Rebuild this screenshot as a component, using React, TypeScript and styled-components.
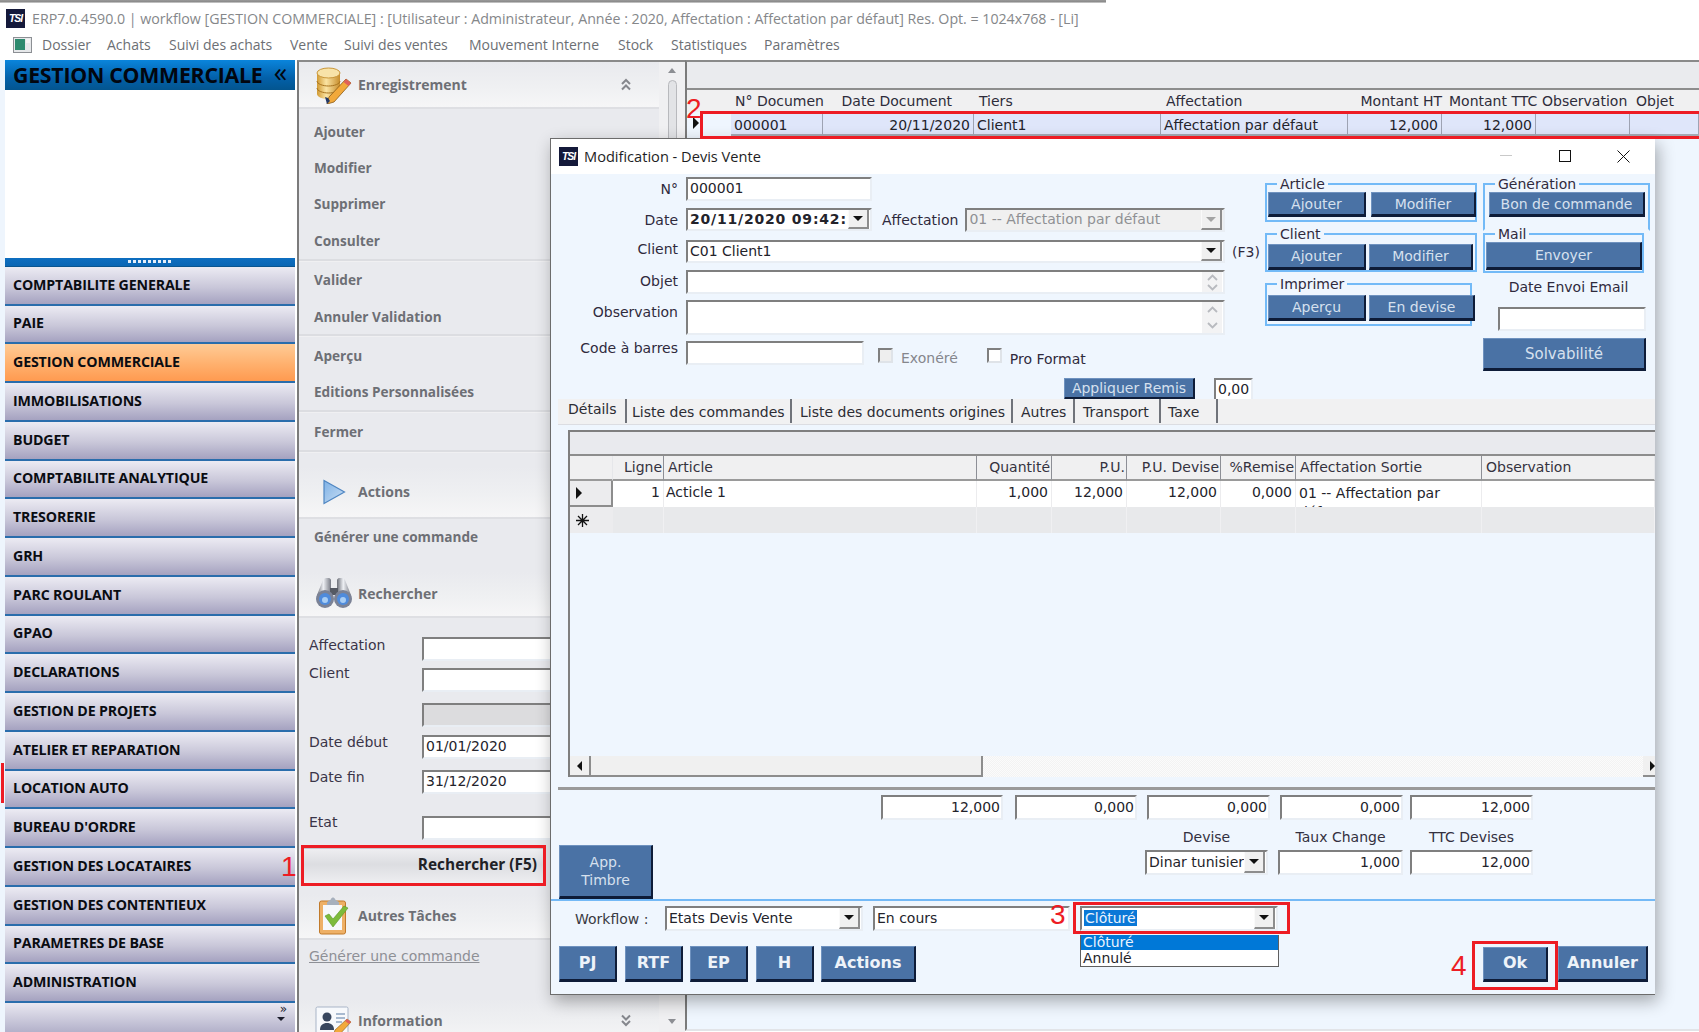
import React from "react";
import styled, { createGlobalStyle } from "styled-components";

const Global = createGlobalStyle`
  html, body { margin: 0; padding: 0; background: #fff; }
  * { box-sizing: border-box; }
  #root { width: 1699px; height: 1032px; }
`;

const UI = `"DejaVu Sans", Verdana, sans-serif`;
const HEAD = `"Open Sans", "Noto Sans", sans-serif`;

const Page = styled.div`
  position: relative;
  width: 1699px;
  height: 1032px;
  overflow: hidden;
  background: #fff;
  display: flex;
  flex-direction: column;
  font-family: ${UI};
  font-size: 14px;
  color: #2b2b33;
`;

/* ---------- window chrome ---------- */
const TopEdge = styled.div`
  width: 1106px;
  height: 3px;
  flex: none;
  background: linear-gradient(#9a9a9a, #8a8a8a 60%, #e4e4e4);
`;
const TitleBar = styled.div`
  height: 30px;
  flex: none;
  display: flex;
  align-items: center;
  gap: 7px;
  padding-left: 6px;
  font-family: ${HEAD};
  font-size: 14.23px;
  letter-spacing: -0.02px;
  color: #85878a;
  white-space: nowrap;
`;
const Logo = styled.span<{ $s: number }>`
  width: ${(p) => p.$s}px;
  height: ${(p) => p.$s}px;
  flex: none;
  background: #14193a;
  color: #fff;
  font: italic 700 ${(p) => p.$s * 0.55}px "Liberation Sans", sans-serif;
  letter-spacing: -1px;
  display: flex;
  align-items: center;
  justify-content: center;
`;
const MenuBar = styled.div`
  height: 27px;
  flex: none;
  display: grid;
  grid-template-columns: 42px 65px 62px 121px 54px 125px 149px 53px 93px auto;
  align-items: start;
  padding-top: 2px;
  font-family: ${HEAD};
  font-size: 14px;
  line-height: 20px;
  color: #6c6f74;
  white-space: nowrap;
`;
const MenuGlyph = styled.span`
  padding: 2px 0 0 13px;
  display: block;
`;

const Body = styled.div`
  flex: 1;
  min-height: 0;
  display: flex;
`;

/* ---------- left navigation ---------- */
const Gutter = styled.div`
  width: 5px;
  flex: none;
  display: flex;
  flex-direction: column;
  background: #eef5fd;
`;
const RedMark = styled.div`
  margin: 703px 0 0 1px;
  width: 3px;
  height: 40px;
  background: #ed1c24;
`;
const Sidebar = styled.nav`
  width: 290px;
  flex: none;
  display: flex;
  flex-direction: column;
  margin-right: 2px;
  background: #fff;
`;
const SideHead = styled.div`
  height: 30px;
  flex: none;
  display: flex;
  align-items: center;
  justify-content: space-between;
  padding: 0 8px 2px 8px;
  background: linear-gradient(#0a85dc, #0360a9 60%, #03558f);
  font-family: ${HEAD};
  font-weight: 700;
  font-size: 21.3px;
  letter-spacing: -0.25px;
  color: #02060f;
  white-space: nowrap;
`;
const Chev = styled.span`
  font-size: 27px;
  font-weight: 400;
  line-height: 22px;
  padding-bottom: 4px;
`;
const SideBlank = styled.div`
  flex: 1;
  background: #fff;
`;
const Splitter = styled.div`
  height: 9px;
  flex: none;
  background: linear-gradient(#0e6ec0, #0a66b4);
  border-bottom: 1px solid #0a5590;
  display: flex;
  align-items: center;
  justify-content: center;
  &::after {
    content: "";
    width: 44px;
    height: 3px;
    background: repeating-linear-gradient(90deg, #e6eef8 0 3px, transparent 3px 5px);
  }
`;
const SideItem = styled.div<{ $active?: boolean }>`
  height: 38.75px;
  flex: none;
  display: flex;
  align-items: center;
  padding: 0 0 2px 8px;
  font-family: ${HEAD};
  font-weight: 700;
  font-size: 14.2px;
  letter-spacing: -0.14px;
  color: #0a0c12;
  background: ${(p) =>
    p.$active
      ? "linear-gradient(#ffcb96, #ffb06d 55%, #ff9a50)"
      : "linear-gradient(#ecebf3, #c9c7d9 55%, #a5a2c0)"};
  border-bottom: 2px solid #2a6dac;
  white-space: nowrap;
`;
const SideFoot = styled.div`
  height: 29px;
  flex: none;
  display: flex;
  flex-direction: column;
  align-items: flex-end;
  padding: 1px 8px 0 0;
  background: linear-gradient(#e9e8f1, #b3b1ca);
  color: #1c1e2c;
  font-size: 12px;
  line-height: 11px;
`;
const DownTip = styled.span`
  width: 0;
  height: 0;
  margin: 2px 2px 0 0;
  border-left: 4px solid transparent;
  border-right: 4px solid transparent;
  border-top: 4px solid #1c1e2c;
`;

/* ---------- tasks panel ---------- */
const TaskPanel = styled.aside`
  width: 388px;
  flex: none;
  display: flex;
  border-left: 2px solid #7b7b7b;
  border-top: 2px solid #8a8a8a;
  background: #e9eaee;
  overflow: hidden;
`;
const TaskColumn = styled.div`
  width: 360px;
  flex: none;
  display: flex;
  flex-direction: column;
`;
const TaskScroll = styled.div`
  width: 26px;
  flex: none;
  display: flex;
  flex-direction: column;
  align-items: center;
  padding-top: 6px;
  background: #f0f0f2;
`;
const ScrollUp = styled.span`
  width: 0;
  height: 0;
  border-left: 4px solid transparent;
  border-right: 4px solid transparent;
  border-bottom: 5px solid #8c8e93;
`;
const ScrollDown = styled.span`
  width: 0;
  height: 0;
  margin-top: auto;
  margin-bottom: 8px;
  border-left: 4px solid transparent;
  border-right: 4px solid transparent;
  border-top: 5px solid #8c8e93;
`;
const ScrollThumb = styled.span`
  margin-top: 7px;
  width: 9px;
  height: 80px;
  background: #e2e3e6;
  border: 1px solid #b8b9bd;
  border-radius: 5px;
`;
const SecHead = styled.div<{ $h: number; $mt?: number }>`
  height: ${(p) => p.$h}px;
  margin-top: ${(p) => p.$mt ?? 0}px;
  flex: none;
  display: flex;
  align-items: center;
  padding-left: 16px;
  gap: 5px;
  background: linear-gradient(180deg, #e9eaee, #eff0f2 55%, #f6f6f7);
  border-bottom: 2px solid #dedfe3;
  font-family: ${HEAD};
  font-weight: 700;
  font-size: 14px;
  color: #6d6f75;
  white-space: nowrap;
`;
const SecIcon = styled.span`
  width: 38px;
  height: 38px;
  flex: none;
  display: flex;
  align-items: center;
  justify-content: center;
`;
const SecTitle = styled.span`
  flex: 1;
`;
const SecChev = styled.span`
  margin-right: 27px;
  line-height: 0;
`;
const TaskItem = styled.div<{ $h?: number }>`
  height: ${(p) => p.$h ?? 36.4}px;
  flex: none;
  display: flex;
  align-items: center;
  padding-left: 15px;
  font-family: ${HEAD};
  font-weight: 700;
  font-size: 13.6px;
  color: #6d6f75;
  white-space: nowrap;
`;
const TaskRule = styled.div`
  height: 3px;
  flex: none;
  background: #dcdde1;
  border-bottom: 1px solid #f0f0f2;
`;
const SearchRow = styled.div<{ $mt: number }>`
  margin-top: ${(p) => p.$mt}px;
  display: flex;
  flex: none;
  height: 24px;
  padding-left: 10px;
  font-size: 14px;
  color: #3a3448;
`;
const SearchLabel = styled.span<{ $up?: number }>`
  width: 113px;
  margin-top: ${(p) => -(p.$up ?? 2)}px;
  flex: none;
  line-height: 18px;
`;
const SearchBtn = styled.div`
  height: 38px;
  flex: none;
  margin: 7px 0 0 2px;
  padding: 0 8px 3px 0;
  display: flex;
  align-items: center;
  justify-content: flex-end;
  width: 244px;
  background: linear-gradient(#eeeef1, #dcdde1 45%, #eeeef1);
  border-top: 2px solid #c6c7cc;
  border-bottom: 2px solid #c6c7cc;
  font-family: ${HEAD};
  font-weight: 700;
  font-size: 15.4px;
  color: #202126;
  white-space: nowrap;
`;
const TaskLink = styled.div`
  height: 24px;
  margin-top: 4px;
  flex: none;
  padding-left: 10px;
  display: flex;
  align-items: center;
  font-size: 14px;
  color: #8e9096;
  text-decoration: underline;
  white-space: nowrap;
`;

/* ---------- generic fields ---------- */
const Field = styled.div<{
  $w?: number;
  $h?: number;
  $right?: boolean;
  $bold?: boolean;
  $off?: boolean;
  $ml?: number;
  $bg?: string;
}>`
  width: ${(p) => (p.$w ? `${p.$w}px` : "auto")};
  height: ${(p) => p.$h ?? 24}px;
  margin-left: ${(p) => p.$ml ?? 0}px;
  flex: ${(p) => (p.$w ? "none" : "1")};
  display: flex;
  align-items: center;
  justify-content: ${(p) => (p.$right ? "flex-end" : "flex-start")};
  padding: ${(p) => (p.$right ? "0 1px 2px 1px" : "0 1px 0 1px")};
  background: ${(p) => p.$bg ?? "#fff"};
  border-style: solid;
  border-width: 2px;
  border-color: #7f7f7f #e9eef4 #e9eef4 #7f7f7f;
  font-family: ${UI};
  font-size: 14px;
  font-weight: ${(p) => (p.$bold ? 700 : 400)};
  letter-spacing: ${(p) => (p.$bold ? "0.8px" : "0")};
  color: ${(p) => (p.$off ? "#8f9094" : "#23232b")};
  white-space: nowrap;
  overflow: hidden;
`;
const FieldText = styled.span`
  flex: 1;
  min-width: 0;
  overflow: hidden;
  padding: 0 0 2px 1px;
`;
const DropBtn = styled.span<{ $off?: boolean }>`
  width: 21px;
  height: 100%;
  flex: none;
  display: flex;
  align-items: center;
  justify-content: center;
  background: #f0f0f0;
  border-right: 2px solid #8d8d8d;
  border-bottom: 2px solid #8d8d8d;
  border-left: 1px solid #fafafa;
  &::after {
    content: "";
    border-left: 5px solid transparent;
    border-right: 5px solid transparent;
    border-top: 5px solid ${(p) => (p.$off ? "#a4a4a4" : "#111")};
  }
`;
const Spin = styled.span`
  width: 20px;
  height: 100%;
  flex: none;
  display: flex;
  flex-direction: column;
  align-items: center;
  justify-content: space-around;
  background: #f3f3f4;
  line-height: 0;
`;
const Chevron = ({ down, c = "#b8babf", s = 11 }: { down?: boolean; c?: string; s?: number }) => (
  <svg width={s} height={7} viewBox="0 0 11 7" fill="none">
    <path d={down ? "M1 1l4.500 4.500L10 1" : "M1 6l4.500-4.500L10 6"} stroke={c} strokeWidth={1.8} />
  </svg>
);
const DoubleChevron = ({ down }: { down?: boolean }) => (
  <svg width="12" height="13" viewBox="0 0 12 13" fill="none" stroke="#85878d" strokeWidth="2">
    {down ? <path d="M2 1.500l4 4 4-4M2 7l4 4 4-4" /> : <path d="M2 6l4-4 4 4M2 11.500l4-4 4 4" />}
  </svg>
);

/* ---------- workspace (document list behind the dialog) ---------- */
const Workspace = styled.main`
  flex: 1;
  min-width: 0;
  display: flex;
  flex-direction: column;
  background: #eff6fe;
  border-top: 2px solid #8a8a8a;
  border-left: 2px solid #7b7b7b;
  border-bottom: 2px solid #e2e4e8;
  margin-bottom: 1px;
  font-size: 14px;
`;
const GroupStrip = styled.div`
  height: 28px;
  flex: none;
  background: #eaebee;
  border-bottom: 2px solid #8d8d8d;
`;
const ListGrid = styled.div<{ $bg: string; $h: number }>`
  height: ${(p) => p.$h}px;
  flex: none;
  display: grid;
  grid-template-columns: 44px 92px 151px 187px 187px 94px 94px 94px 1fr;
  background: ${(p) => p.$bg};
  align-items: center;
  white-space: nowrap;
`;
const ListHead = styled.div<{ $pl?: number; $pr?: number; $right?: boolean }>`
  padding-left: ${(p) => p.$pl ?? 5}px;
  padding-right: ${(p) => p.$pr ?? 0}px;
  text-align: ${(p) => (p.$right ? "right" : "left")};
  color: #2e2c3a;
`;
const ListCell = styled.div<{ $right?: boolean }>`
  height: 100%;
  display: flex;
  align-items: center;
  justify-content: ${(p) => (p.$right ? "flex-end" : "flex-start")};
  padding: 3px 3px 0;
  background: #dfe6fa;
  border-right: 1px solid #9ea3b3;
  border-bottom: 2px solid #a5a8b2;
  color: #23232b;
`;
const RowMark = styled.div`
  height: 100%;
  display: flex;
  align-items: center;
  padding: 0 0 2px 6px;
  background: #eff6fe;
`;
const Arrow = styled.span`
  width: 0;
  height: 0;
  border-top: 6px solid transparent;
  border-bottom: 6px solid transparent;
  border-left: 6px solid #111;
`;

/* ---------- dialog ---------- */
const Dialog = styled.section`
  position: absolute;
  left: 550px;
  top: 138px;
  width: 1105px;
  height: 857px;
  display: flex;
  flex-direction: column;
  background: #eff6fe;
  border-top: 1px solid #6c6c6c;
  border-left: 1px solid #6c6c6c;
  border-bottom: 1px solid #6c6c6c;
  box-shadow: 3px 6px 16px rgba(0, 0, 0, 0.32);
`;
const DialogTitle = styled.header`
  height: 35px;
  flex: none;
  display: flex;
  align-items: center;
  padding: 0 0 1px 8px;
  gap: 6px;
  background: #fff;
  font-family: ${HEAD};
  font-size: 14.6px;
  color: #1e1e24;
`;
const TitleText = styled.span`
  flex: 1;
`;
const WinBtn = styled.span<{ $w: number }>`
  width: ${(p) => p.$w}px;
  display: flex;
  justify-content: center;
  line-height: 0;
`;

const TopForm = styled.div`
  height: 225px;
  flex: none;
  display: flex;
`;
const FormColumn = styled.div`
  width: 707px;
  flex: none;
  padding-top: 3px;
  display: flex;
  flex-direction: column;
`;
const FormRow = styled.div<{ $mt?: number }>`
  margin-top: ${(p) => p.$mt ?? 0}px;
  display: flex;
  align-items: flex-start;
  flex: none;
`;
const FormLabel = styled.label<{ $up?: number }>`
  width: 127px;
  margin-top: ${(p) => 3 - (p.$up ?? 0)}px;
  margin-right: 8px;
  flex: none;
  text-align: right;
  color: #2f2a3d;
  line-height: 18px;
  white-space: nowrap;
`;
const InlineLabel = styled.span<{ $ml: number; $off?: boolean; $pt?: number }>`
  margin-left: ${(p) => p.$ml}px;
  padding-top: ${(p) => p.$pt ?? 3}px;
  line-height: 18px;
  flex: none;
  color: ${(p) => (p.$off ? "#85868c" : "#2f2a3d")};
  white-space: nowrap;
`;
const Check = styled.span<{ $ml: number; $off?: boolean }>`
  margin: 7px 8px 0 ${(p) => p.$ml}px;
  width: 15px;
  height: 15px;
  flex: none;
  background: ${(p) => (p.$off ? "#eeeeee" : "#fff")};
  border: 2px solid;
  border-color: #7f7f7f #dfe3e8 #dfe3e8 #7f7f7f;
`;
const Pad = styled.span<{ $w: number }>`
  width: ${(p) => p.$w}px;
  flex: none;
`;
const Btn = styled.button<{ $w?: number; $h?: number; $bold?: boolean; $ml?: number; $size?: number }>`
  width: ${(p) => (p.$w ? `${p.$w}px` : "100%")};
  height: ${(p) => p.$h ?? 25}px;
  margin-left: ${(p) => p.$ml ?? 0}px;
  flex: none;
  padding: 0;
  background: #4a72a5;
  border-style: solid;
  border-width: 1px 2px 3px 1px;
  border-color: #6f92bf #0e1c38 #0e1c38 #6f92bf;
  color: ${(p) => (p.$bold ? "#eef3f9" : "#d6e0ee")};
  font-family: ${UI};
  font-size: ${(p) => p.$size ?? 14}px;
  font-weight: ${(p) => (p.$bold ? 700 : 400)};
  line-height: 18px;
  white-space: nowrap;
`;

const GroupCol = styled.div<{ $w: number; $ml: number }>`
  width: ${(p) => p.$w}px;
  margin-left: ${(p) => p.$ml}px;
  padding-top: 2px;
  flex: none;
  display: flex;
  flex-direction: column;
  gap: 4px;
`;
const Group = styled.fieldset<{ $w?: number; $h: number; $open?: boolean; $pt?: number }>`
  width: ${(p) => (p.$w ? `${p.$w}px` : "100%")};
  height: ${(p) => p.$h}px;
  margin: 0 0 ${(p) => (p.$open ? "-9px" : "0")} 0;
  padding: ${(p) => p.$pt ?? 0}px 0 0 1px;
  min-width: 0;
  flex: none;
  display: flex;
  border: 2px solid #73baf7;
  border-bottom-color: ${(p) => (p.$open ? "transparent" : "#73baf7")};
`;
const Legend = styled.legend`
  margin-left: 9px;
  padding: 0 3px;
  height: 16px;
  line-height: 16px;
  font-size: 14px;
  color: #2f2a3d;
`;
const GroupButtons = styled.div`
  display: flex;
`;
const EmailLabel = styled.div`
  margin: 1px 0 0;
  padding-left: 4px;
  text-align: center;
  line-height: 18px;
  color: #2f2a3d;
`;

const TabStrip = styled.div`
  height: 25px;
  margin-left: 7px;
  flex: none;
  display: flex;
  background: #f1f1f2;
  white-space: nowrap;
`;
const Tab = styled.div<{ $active?: boolean; $w: number; $pl?: number }>`
  width: ${(p) => p.$w}px;
  flex: none;
  padding-left: ${(p) => p.$pl ?? 5}px;
  padding-top: ${(p) => (p.$active ? 1 : 4)}px;
  line-height: 18px;
  color: #2c2c34;
  border-right: 2px solid #70737a;
  margin-bottom: 1px;
`;
const TabPage = styled.div`
  height: 366px;
  margin-left: 7px;
  flex: none;
  display: flex;
  flex-direction: column;
  padding: 5px 0 10px 10px;
  background: #eff6fe;
  border-top: 1px solid #dcdde2;
  border-bottom: 3px solid #9a9a9a;
`;
const GridBox = styled.div`
  flex: 1;
  min-height: 0;
  display: flex;
  flex-direction: column;
  border-left: 2px solid #7f7f7f;
  border-top: 2px solid #7f7f7f;
`;
const GridStrip = styled.div`
  height: 24px;
  flex: none;
  background: #e9eaee;
  border-bottom: 2px solid #8d8d8d;
`;
const GridRow = styled.div<{ $h: number; $bg: string }>`
  height: ${(p) => p.$h}px;
  flex: none;
  display: grid;
  grid-template-columns: 43px 51px 313px 75px 75px 94px 75px 186px 1fr;
  background: ${(p) => p.$bg};
  white-space: nowrap;
`;
const HeadCell = styled.div<{ $right?: boolean; $sep?: boolean }>`
  display: flex;
  align-items: center;
  justify-content: ${(p) => (p.$right ? "flex-end" : "flex-start")};
  padding: 0 1px 1px 4px;
  overflow: hidden;
  color: #35333f;
  border-right: ${(p) => (p.$sep ? "1px solid #8d8f96" : "1px solid #e6e7ea")};
  border-bottom: 2px solid #9a9a9a;
`;
const BodyCell = styled.div<{ $right?: boolean; $tone?: string }>`
  display: flex;
  align-items: flex-start;
  justify-content: ${(p) => (p.$right ? "flex-end" : "flex-start")};
  padding: 3px 3px 0 2px;
  overflow: hidden;
  border-right: 1px solid ${(p) => p.$tone ?? "#ececee"};
  color: #23232b;
`;
const WrapCell = styled(BodyCell)`
  white-space: normal;
  line-height: 19px;
  display: block;
  padding-left: 3px;
`;
const RowHeadCell = styled.div<{ $line?: boolean }>`
  display: flex;
  align-items: center;
  padding-left: 6px;
  background: #ececee;
  border-right: ${(p) => (p.$line ? "2px solid #8d8d8d" : "none")};
  border-bottom: ${(p) => (p.$line ? "2px solid #8d8d8d" : "none")};
`;
const NewRowIcon = () => (
  <svg width="13" height="13" viewBox="0 0 13 13" stroke="#111" strokeWidth="1.300">
    <path d="M6.500 0v13M0 6.500h13M2 2l9 9M11 2l-9 9" />
  </svg>
);
const GridFill = styled.div`
  flex: 1;
`;
const HScroll = styled.div`
  height: 21px;
  flex: none;
  display: flex;
  overflow: hidden;
  background: repeating-conic-gradient(#f3f3f3 0 25%, #fbfbfb 0 50%) 0 0 / 2px 2px;
`;
const HScrollBtn = styled.span<{ $right?: boolean }>`
  width: 21px;
  flex: none;
  margin-left: ${(p) => (p.$right ? "auto" : 0)};
  margin-right: ${(p) => (p.$right ? "-9px" : 0)};
  display: flex;
  align-items: center;
  justify-content: center;
  background: #f0f0f0;
  border-right: 2px solid #8d8d8d;
  border-bottom: 2px solid #8d8d8d;
  &::after {
    content: "";
    border-top: 5px solid transparent;
    border-bottom: 5px solid transparent;
    border-${(p) => (p.$right ? "left" : "right")}: 5px solid #111;
  }
`;
const HThumb = styled.span`
  width: 392px;
  flex: none;
  background: #f0f0f0;
  border-right: 2px solid #8d8d8d;
  border-bottom: 2px solid #8d8d8d;
`;

const TotalsArea = styled.div`
  height: 109px;
  flex: none;
  display: flex;
`;
const TimbreCol = styled.div`
  width: 330px;
  flex: none;
  padding-left: 8px;
  display: flex;
  align-items: flex-end;
`;
const FieldsCol = styled.div`
  flex: 1;
  padding-top: 5px;
  display: flex;
  flex-direction: column;
`;
const FieldsRow = styled.div<{ $mt?: number; $ml?: number }>`
  margin-top: ${(p) => p.$mt ?? 0}px;
  margin-left: ${(p) => p.$ml ?? 0}px;
  display: flex;
  flex: none;
`;
const CaptionCell = styled.div<{ $w: number; $ml?: number }>`
  width: ${(p) => p.$w}px;
  margin-left: ${(p) => p.$ml ?? 0}px;
  flex: none;
  text-align: center;
  line-height: 18px;
  color: #33303f;
`;
const WorkflowArea = styled.div`
  flex: 1;
  padding: 5px 0 0;
  border-top: 2px solid #74b9f6;
  display: flex;
  flex-direction: column;
`;
const WorkflowRow = styled.div`
  height: 25px;
  padding-left: 24px;
  flex: none;
  display: flex;
  align-items: center;
`;
const WorkflowLabel = styled.span`
  width: 90px;
  flex: none;
  color: #3a3a42;
`;
const SelectWrap = styled.div`
  position: relative;
  width: 198px;
  margin-left: 10px;
  flex: none;
`;
const Selected = styled.span`
  background: #0a78d7;
  color: #eaf3fd;
  padding: 0 1px;
`;
const DropList = styled.ul`
  position: absolute;
  left: 0;
  top: 29px;
  width: 199px;
  margin: 0;
  padding: 0;
  list-style: none;
  background: #fff;
  border: 1px solid #5f5f5f;
  border-top: none;
  z-index: 2;
`;
const DropOption = styled.li<{ $on?: boolean }>`
  height: ${(p) => (p.$on ? 15 : 16)}px;
  line-height: ${(p) => (p.$on ? 15 : 17)}px;
  padding-left: 2px;
  background: ${(p) => (p.$on ? "#0078d7" : "#fff")};
  color: ${(p) => (p.$on ? "#eaf3fd" : "#23232b")};
`;
const ActionRow = styled.div`
  margin-top: 15px;
  padding: 0 7px 0 8px;
  flex: none;
  display: flex;
  align-items: center;
`;
const Grow = styled.span`
  flex: 1;
`;

/* ---------- red annotations painted over the capture ---------- */
const RedBox = styled.div<{ $x: number; $y: number; $w: number; $h: number }>`
  position: absolute;
  left: ${(p) => p.$x}px;
  top: ${(p) => p.$y}px;
  width: ${(p) => p.$w}px;
  height: ${(p) => p.$h}px;
  border: 3px solid #ed1c24;
  pointer-events: none;
  z-index: 3;
`;
const RedNum = styled.span<{ $x: number; $y: number }>`
  position: absolute;
  left: ${(p) => p.$x}px;
  top: ${(p) => p.$y}px;
  font: 400 28px/32px "Liberation Sans", sans-serif;
  color: #ed1c24;
  z-index: 3;
`;

/* ---------- drawn icons ---------- */
const DbIcon = () => (
  <svg width="38" height="38" viewBox="0 0 38 38">
    <defs>
      <linearGradient id="gold" x1="0" x2="1">
        <stop offset="0" stopColor="#d19a33" />
        <stop offset="0.4" stopColor="#fbe4a2" />
        <stop offset="1" stopColor="#c78d2c" />
      </linearGradient>
    </defs>
    <path d="M2 7v21c0 3 6 5 11 5s12-2 12-5V7z" fill="url(#gold)" />
    <ellipse cx="13.500" cy="7" rx="11.500" ry="5" fill="#f8e3a8" stroke="#c9963a" />
    <path d="M2 15c0 3 6 5 11.500 5S25 18 25 15M2 22c0 3 6 5 11.500 5S25 25 25 22" fill="none" stroke="#a8741f" strokeWidth="1" />
    <path d="M31 13l5 4-17 19-7 2 2-7z" fill="#f2a93b" stroke="#8a5a17" strokeWidth=".8" />
    <path d="M31 13l5 4-2.500 3-5-4z" fill="#e0605a" />
    <path d="M12 38l-2-7 3 1 2 3z" fill="#243a66" />
  </svg>
);
const PlayIcon = () => (
  <svg width="26" height="26" viewBox="0 0 26 26">
    <defs>
      <linearGradient id="play" x1="0" x2="1" y1="0" y2="1">
        <stop offset="0" stopColor="#7fb2e6" />
        <stop offset="1" stopColor="#c9def3" />
      </linearGradient>
    </defs>
    <path d="M3 1.500 23.500 13 3 24.500z" fill="url(#play)" stroke="#4f86c2" strokeWidth="1.200" />
  </svg>
);
const BinocIcon = () => (
  <svg width="38" height="32" viewBox="0 0 38 32">
    <defs>
      <linearGradient id="bin" x1="0" x2="1">
        <stop offset="0" stopColor="#6d7079" />
        <stop offset=".45" stopColor="#eef0f4" />
        <stop offset="1" stopColor="#777a84" />
      </linearGradient>
    </defs>
    <path d="M8 2c2-3 7-3 8 0v15H2z" fill="url(#bin)" />
    <path d="M22 2c1-3 6-3 8 0l6 15H22z" fill="url(#bin)" />
    <rect x="15" y="10" width="8" height="7" fill="#555963" />
    <circle cx="10" cy="21" r="9" fill="#7b8296" />
    <circle cx="28" cy="21" r="9" fill="#7b8296" />
    <circle cx="10" cy="21" r="6" fill="#4f8bdc" />
    <circle cx="28" cy="21" r="6" fill="#4f8bdc" />
    <circle cx="10" cy="22" r="3" fill="#a8cdf4" />
    <circle cx="28" cy="22" r="3" fill="#a8cdf4" />
  </svg>
);
const ClipIcon = () => (
  <svg width="32" height="38" viewBox="0 0 32 38">
    <rect x="1.500" y="4" width="26" height="33" rx="2" fill="#eeb066" stroke="#c17a2b" />
    <rect x="5" y="8" width="19" height="25" fill="#f6f8fb" />
    <path d="M9 6c0-2 3-2 4-4 1-2 3-2 4 0 1 2 4 2 4 4v2H9z" fill="#a7b0bd" />
    <path d="M7 19l4-2 4 5 11-13 4 2-15 19z" fill="#7dbb3c" stroke="#5b9526" strokeWidth=".6" />
  </svg>
);
const InfoIcon = () => (
  <svg width="38" height="30" viewBox="0 0 38 30">
    <rect x="1" y="1" width="32" height="29" rx="1.500" fill="#f7f9fc" stroke="#a9b5c7" />
    <circle cx="12" cy="11" r="4.500" fill="#38465e" />
    <path d="M5 24c0-5 3-7 7-7s7 2 7 7z" fill="#38465e" />
    <path d="M21 8h9M21 12h9M21 16h6" stroke="#8fa5c1" strokeWidth="1.400" />
    <path d="M32 13l4 3-12 13-6 1 2-6z" fill="#f2a93b" stroke="#8a5a17" strokeWidth=".6" />
    <path d="M32 13l4 3-2 2-4-3z" fill="#e0605a" />
  </svg>
);
const SheetIcon = () => (
  <svg width="19" height="16" viewBox="0 0 19 16">
    <rect x=".5" y=".5" width="18" height="15" fill="#e6e8ea" stroke="#8c8f94" />
    <rect x="2" y="2" width="10" height="11" fill="#2d8a6e" />
    <rect x="13" y="2" width="4" height="4" fill="#f4f4f4" />
  </svg>
);

const items = [
  "COMPTABILITE GENERALE",
  "PAIE",
  "GESTION COMMERCIALE",
  "IMMOBILISATIONS",
  "BUDGET",
  "COMPTABILITE ANALYTIQUE",
  "TRESORERIE",
  "GRH",
  "PARC ROULANT",
  "GPAO",
  "DECLARATIONS",
  "GESTION DE PROJETS",
  "ATELIER ET REPARATION",
  "LOCATION AUTO",
  "BUREAU D'ORDRE",
  "GESTION DES LOCATAIRES",
  "GESTION DES CONTENTIEUX",
  "PARAMETRES DE BASE",
  "ADMINISTRATION",
];

export default function App() {
  return (
    <Page>
      <Global />
      <TopEdge />
      <TitleBar>
        <Logo $s={19}>TSI</Logo>
        ERP7.0.4590.0 | workflow [GESTION COMMERCIALE] : [Utilisateur : Administrateur, Année : 2020, Affectation :
        Affectation par défaut] Res. Opt. = 1024x768 - [Li]
      </TitleBar>
      <MenuBar>
        <MenuGlyph>
          <SheetIcon />
        </MenuGlyph>
        <span>Dossier</span>
        <span>Achats</span>
        <span>Suivi des achats</span>
        <span>Vente</span>
        <span>Suivi des ventes</span>
        <span>Mouvement Interne</span>
        <span>Stock</span>
        <span>Statistiques</span>
        <span>Paramètres</span>
      </MenuBar>

      <Body>
        <Gutter>
          <RedMark />
        </Gutter>
        <Sidebar>
          <SideHead>
            GESTION COMMERCIALE
            <Chev>«</Chev>
          </SideHead>
          <SideBlank />
          <Splitter />
          {items.map((t) => (
            <SideItem key={t} $active={t === "GESTION COMMERCIALE"}>
              {t}
            </SideItem>
          ))}
          <SideFoot>
            »
            <DownTip />
          </SideFoot>
        </Sidebar>

        <TaskPanel>
          <TaskColumn>
            <SecHead $h={47}>
              <SecIcon>
                <DbIcon />
              </SecIcon>
              <SecTitle>Enregistrement</SecTitle>
              <SecChev>
                <DoubleChevron />
              </SecChev>
            </SecHead>
            <TaskItem $h={4} />
            <TaskItem>Ajouter</TaskItem>
            <TaskItem>Modifier</TaskItem>
            <TaskItem>Supprimer</TaskItem>
            <TaskItem>Consulter</TaskItem>
            <TaskRule />
            <TaskItem>Valider</TaskItem>
            <TaskItem>Annuler Validation</TaskItem>
            <TaskRule />
            <TaskItem>Aperçu</TaskItem>
            <TaskItem>Editions Personnalisées</TaskItem>
            <TaskRule />
            <TaskItem>Fermer</TaskItem>
            <TaskRule />
            <SecHead $h={52} $mt={14}>
              <SecIcon>
                <PlayIcon />
              </SecIcon>
              <SecTitle>Actions</SecTitle>
            </SecHead>
            <TaskItem>Générer une commande</TaskItem>
            <SecHead $h={46} $mt={17}>
              <SecIcon>
                <BinocIcon />
              </SecIcon>
              <SecTitle>Rechercher</SecTitle>
            </SecHead>
            <SearchRow $mt={19}>
              <SearchLabel $up={1}>Affectation</SearchLabel>
              <Field />
            </SearchRow>
            <SearchRow $mt={7}>
              <SearchLabel $up={4}>Client</SearchLabel>
              <Field />
            </SearchRow>
            <SearchRow $mt={11}>
              <SearchLabel />
              <Field $bg="#dcdcde" />
            </SearchRow>
            <SearchRow $mt={8}>
              <SearchLabel>Date début</SearchLabel>
              <Field>
                <FieldText>01/01/2020</FieldText>
              </Field>
            </SearchRow>
            <SearchRow $mt={11}>
              <SearchLabel>Date fin</SearchLabel>
              <Field>
                <FieldText>31/12/2020</FieldText>
              </Field>
            </SearchRow>
            <SearchRow $mt={22}>
              <SearchLabel $up={3}>Etat</SearchLabel>
              <Field />
            </SearchRow>
            <SearchBtn>Rechercher (F5)</SearchBtn>
            <SecHead $h={46} $mt={9}>
              <SecIcon>
                <ClipIcon />
              </SecIcon>
              <SecTitle>Autres Tâches</SecTitle>
            </SecHead>
            <TaskLink>Générer une commande</TaskLink>
            <SecHead $h={46} $mt={31}>
              <SecIcon>
                <InfoIcon />
              </SecIcon>
              <SecTitle>Information</SecTitle>
              <SecChev>
                <DoubleChevron down />
              </SecChev>
            </SecHead>
          </TaskColumn>
          <TaskScroll>
            <ScrollUp />
            <ScrollThumb />
            <ScrollDown />
          </TaskScroll>
        </TaskPanel>

        <Workspace>
          <GroupStrip />
          <ListGrid $bg="#f0f0f1" $h={22}>
            <span />
            <ListHead $pl={4}>N° Documen</ListHead>
            <ListHead $right $pr={22}>
              Date Document
            </ListHead>
            <ListHead>Tiers</ListHead>
            <ListHead>Affectation</ListHead>
            <ListHead $right $pr={0}>
              Montant HT
            </ListHead>
            <ListHead $pl={7}>Montant TTC</ListHead>
            <ListHead $pl={6}>Observation</ListHead>
            <ListHead $pl={6}>Objet</ListHead>
          </ListGrid>
          <ListGrid $bg="#eff6fe" $h={24}>
            <RowMark>
              <Arrow />
            </RowMark>
            <ListCell>000001</ListCell>
            <ListCell $right>20/11/2020</ListCell>
            <ListCell>Client1</ListCell>
            <ListCell>Affectation par défaut</ListCell>
            <ListCell $right>12,000</ListCell>
            <ListCell $right>12,000</ListCell>
            <ListCell />
            <ListCell />
          </ListGrid>
        </Workspace>
      </Body>

      <Dialog>
        <DialogTitle>
          <Logo $s={19}>TSI</Logo>
          <TitleText>Modification - Devis Vente</TitleText>
          <WinBtn $w={66}>
            <svg width="12" height="2">
              <rect width="12" height="1" fill="#c9c9c9" />
            </svg>
          </WinBtn>
          <WinBtn $w={40}>
            <svg width="13" height="13" fill="none" stroke="#111">
              <rect x=".5" y=".5" width="11" height="11" />
            </svg>
          </WinBtn>
          <WinBtn $w={64}>
            <svg width="13" height="13" fill="none" stroke="#111">
              <path d="M.5.500l12 12M12.500.500l-12 12" />
            </svg>
          </WinBtn>
        </DialogTitle>

        <TopForm>
          <FormColumn>
            <FormRow>
              <FormLabel>N°</FormLabel>
              <Field $w={186}>
                <FieldText>000001</FieldText>
              </Field>
            </FormRow>
            <FormRow $mt={7}>
              <FormLabel>Date</FormLabel>
              <Field $w={186} $h={23} $bold>
                <FieldText>20/11/2020 09:42:13</FieldText>
                <DropBtn />
              </Field>
              <InlineLabel $ml={10}>Affectation</InlineLabel>
              <Field $w={260} $ml={7} $off $bg="#f0f0f0">
                <FieldText>01 -- Affectation par défaut</FieldText>
                <DropBtn $off />
              </Field>
            </FormRow>
            <FormRow $mt={8}>
              <FormLabel $up={3}>Client</FormLabel>
              <Field $w={539} $h={23}>
                <FieldText>C01 Client1</FieldText>
                <DropBtn />
              </Field>
              <InlineLabel $ml={7}>(F3)</InlineLabel>
            </FormRow>
            <FormRow $mt={7}>
              <FormLabel $up={1}>Objet</FormLabel>
              <Field $w={539}>
                <FieldText />
                <Spin>
                  <Chevron />
                  <Chevron down />
                </Spin>
              </Field>
            </FormRow>
            <FormRow $mt={6}>
              <FormLabel>Observation</FormLabel>
              <Field $w={539} $h={35}>
                <FieldText />
                <Spin>
                  <Chevron />
                  <Chevron down />
                </Spin>
              </Field>
            </FormRow>
            <FormRow $mt={6}>
              <FormLabel $up={5}>Code à barres</FormLabel>
              <Field $w={178} />
              <Check $ml={14} $off />
              <InlineLabel $off $ml={0} $pt={8}>
                Exonéré
              </InlineLabel>
              <Check $ml={29} />
              <InlineLabel $ml={0} $pt={9}>
                Pro Format
              </InlineLabel>
            </FormRow>
            <FormRow $mt={10}>
              <Pad $w={513} />
              <Btn $w={131} $h={22}>
                Appliquer Remis
              </Btn>
              <Field $w={39} $h={23} $ml={19}>
                <FieldText>0,00</FieldText>
              </Field>
            </FormRow>
          </FormColumn>

          <GroupCol $w={212} $ml={7}>
            <Group $h={46}>
              <Legend>Article</Legend>
              <GroupButtons>
                <Btn $w={98}>Ajouter</Btn>
                <Btn $w={105} $ml={5}>
                  Modifier
                </Btn>
              </GroupButtons>
            </Group>
            <Group $h={46} $pt={2}>
              <Legend>Client</Legend>
              <GroupButtons>
                <Btn $w={98} $h={26}>
                  Ajouter
                </Btn>
                <Btn $w={104} $h={26} $ml={3}>
                  Modifier
                </Btn>
              </GroupButtons>
            </Group>
            <Group $w={207} $h={50} $pt={3}>
              <Legend>Imprimer</Legend>
              <GroupButtons>
                <Btn $w={98} $h={26}>
                  Aperçu
                </Btn>
                <Btn $w={106} $h={26} $ml={3}>
                  En devise
                </Btn>
              </GroupButtons>
            </Group>
          </GroupCol>

          <GroupCol $w={167} $ml={6}>
            <Group $h={55} $open>
              <Legend>Génération</Legend>
              <GroupButtons>
                <Btn $w={156} $ml={3}>
                  Bon de commande
                </Btn>
              </GroupButtons>
            </Group>
            <Group $w={161} $h={47}>
              <Legend>Mail</Legend>
              <Btn $w={156} $h={28}>
                Envoyer
              </Btn>
            </Group>
            <EmailLabel>Date Envoi Email</EmailLabel>
            <FormRow $mt={7}>
              <Field $w={148} $ml={15} />
            </FormRow>
            <FormRow $mt={3}>
              <Btn $w={163} $h={33} $size={15}>
                Solvabilité
              </Btn>
            </FormRow>
          </GroupCol>
        </TopForm>

        <TabStrip>
          <Tab $active $w={69} $pl={10}>
            Détails
          </Tab>
          <Tab $w={165}>Liste des commandes</Tab>
          <Tab $w={221} $pl={8}>
            Liste des documents origines
          </Tab>
          <Tab $w={62} $pl={8}>
            Autres
          </Tab>
          <Tab $w={86} $pl={8}>
            Transport
          </Tab>
          <Tab $w={57} $pl={7}>
            Taxe
          </Tab>
        </TabStrip>
        <TabPage>
          <GridBox>
            <GridStrip />
            <GridRow $h={25} $bg="#f0f0f1">
              <HeadCell />
              <HeadCell $right $sep>
                Ligne
              </HeadCell>
              <HeadCell $sep>Article</HeadCell>
              <HeadCell $right $sep>
                Quantité
              </HeadCell>
              <HeadCell $right $sep>
                P.U.
              </HeadCell>
              <HeadCell $right $sep>
                P.U. Devise
              </HeadCell>
              <HeadCell $right $sep>
                %Remise
              </HeadCell>
              <HeadCell $sep>Affectation Sortie</HeadCell>
              <HeadCell>Observation</HeadCell>
            </GridRow>
            <GridRow $h={26} $bg="#fff">
              <RowHeadCell $line>
                <Arrow />
              </RowHeadCell>
              <BodyCell $right>1</BodyCell>
              <BodyCell>Acticle 1</BodyCell>
              <BodyCell $right>1,000</BodyCell>
              <BodyCell $right>12,000</BodyCell>
              <BodyCell $right>12,000</BodyCell>
              <BodyCell $right>0,000</BodyCell>
              <WrapCell>01 -- Affectation par défaut</WrapCell>
              <BodyCell />
            </GridRow>
            <GridRow $h={26} $bg="#e8e9eb">
              <RowHeadCell>
                <NewRowIcon />
              </RowHeadCell>
              <BodyCell $tone="#f0f0f2" />
              <BodyCell $tone="#f0f0f2" />
              <BodyCell $tone="#f0f0f2" />
              <BodyCell $tone="#f0f0f2" />
              <BodyCell $tone="#f0f0f2" />
              <BodyCell $tone="#f0f0f2" />
              <BodyCell $tone="#f0f0f2" />
              <BodyCell $tone="#f0f0f2" />
            </GridRow>
            <GridFill />
            <HScroll>
              <HScrollBtn />
              <HThumb />
              <HScrollBtn $right />
            </HScroll>
          </GridBox>
        </TabPage>

        <TotalsArea>
          <TimbreCol>
            <Btn $w={94} $h={54}>
              App.
              <br />
              Timbre
            </Btn>
          </TimbreCol>
          <FieldsCol>
            <FieldsRow>
              <Field $w={122} $h={25} $right>
                12,000
              </Field>
              <Field $w={122} $h={25} $right $ml={12}>
                0,000
              </Field>
              <Field $w={123} $h={25} $right $ml={10}>
                0,000
              </Field>
              <Field $w={123} $h={25} $right $ml={10}>
                0,000
              </Field>
              <Field $w={123} $h={25} $right $ml={7}>
                12,000
              </Field>
            </FieldsRow>
            <FieldsRow $mt={8} $ml={264}>
              <CaptionCell $w={123}>Devise</CaptionCell>
              <CaptionCell $w={125} $ml={10}>
                Taux Change
              </CaptionCell>
              <CaptionCell $w={123} $ml={7}>
                TTC Devises
              </CaptionCell>
            </FieldsRow>
            <FieldsRow $mt={4} $ml={264}>
              <Field $w={123} $h={25}>
                <FieldText>Dinar tunisier</FieldText>
                <DropBtn />
              </Field>
              <Field $w={125} $h={25} $right $ml={10}>
                1,000
              </Field>
              <Field $w={123} $h={25} $right $ml={7}>
                12,000
              </Field>
            </FieldsRow>
          </FieldsCol>
        </TotalsArea>

        <WorkflowArea>
          <WorkflowRow>
            <WorkflowLabel>Workflow :</WorkflowLabel>
            <Field $w={198} $h={25}>
              <FieldText>Etats Devis Vente</FieldText>
              <DropBtn />
            </Field>
            <Field $w={197} $h={25} $ml={10}>
              <FieldText>En cours</FieldText>
            </Field>
            <SelectWrap>
              <Field $h={25}>
                <FieldText>
                  <Selected>Clôturé</Selected>
                </FieldText>
                <DropBtn />
              </Field>
              <DropList>
                <DropOption $on>Clôturé</DropOption>
                <DropOption>Annulé</DropOption>
              </DropList>
            </SelectWrap>
          </WorkflowRow>
          <ActionRow>
            <Btn $w={58} $h={36} $bold $size={16}>
              PJ
            </Btn>
            <Btn $w={58} $h={36} $ml={8} $bold $size={16}>
              RTF
            </Btn>
            <Btn $w={58} $h={36} $ml={7} $bold $size={16}>
              EP
            </Btn>
            <Btn $w={58} $h={36} $ml={8} $bold $size={16}>
              H
            </Btn>
            <Btn $w={95} $h={36} $ml={7} $bold $size={16}>
              Actions
            </Btn>
            <Grow />
            <Btn $w={65} $h={35} $bold $size={16}>
              Ok
            </Btn>
            <Btn $w={90} $h={36} $ml={10} $bold $size={16}>
              Annuler
            </Btn>
          </ActionRow>
        </WorkflowArea>
      </Dialog>

      <RedBox $x={301} $y={845} $w={245} $h={41} />
      <RedBox $x={700} $y={111} $w={1010} $h={28} />
      <RedBox $x={1073} $y={902} $w={217} $h={32} />
      <RedBox $x={1472} $y={941} $w={86} $h={49} />
      <RedNum $x={281} $y={851}>1</RedNum>
      <RedNum $x={686} $y={93}>2</RedNum>
      <RedNum $x={1050} $y={899}>3</RedNum>
      <RedNum $x={1451} $y={950}>4</RedNum>
    </Page>
  );
}
